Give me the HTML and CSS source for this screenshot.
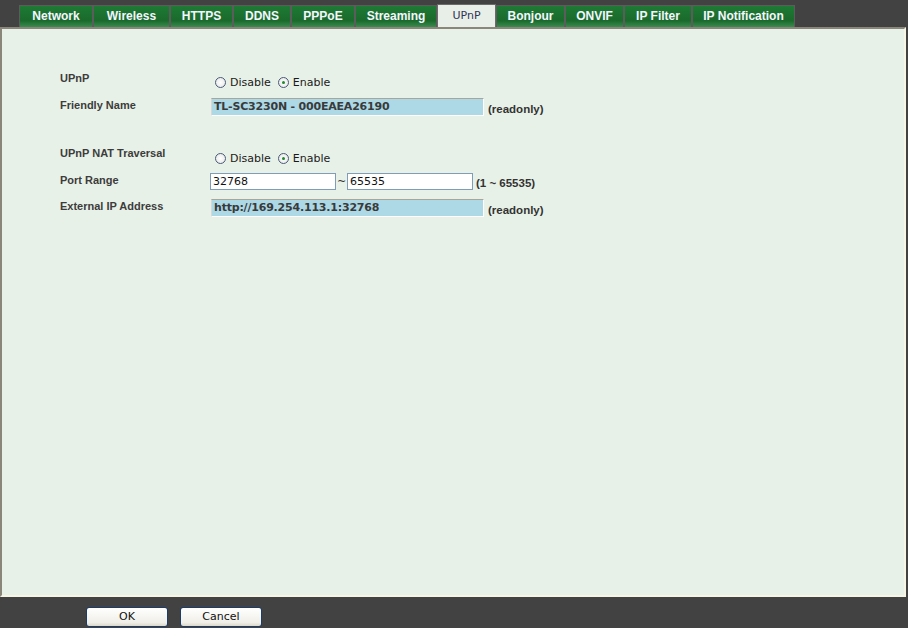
FILE: index.html
```html
<!DOCTYPE html>
<html>
<head>
<meta charset="utf-8">
<link rel="stylesheet" href="styles.css">
</head>
<body>
<div class="tabs">
  <div class="tab w-network">Network</div>
  <div class="tab w-wireless">Wireless</div>
  <div class="tab w-https">HTTPS</div>
  <div class="tab w-ddns">DDNS</div>
  <div class="tab w-pppoe">PPPoE</div>
  <div class="tab w-streaming">Streaming</div>
  <div class="tab active w-upnp">UPnP</div>
  <div class="tab w-bonjour">Bonjour</div>
  <div class="tab w-onvif">ONVIF</div>
  <div class="tab w-ipfilter">IP Filter</div>
  <div class="tab w-ipnotif">IP Notification</div>
</div>
<div class="panel">
  <div class="form">
    <div class="row r-upnp">
      <div class="label">UPnP</div>
      <div class="ctrl radios">
        <span class="radio"></span><span class="rtext">Disable</span>
        <span class="radio on"></span><span class="rtext">Enable</span>
      </div>
    </div>
    <div class="row r-friendly">
      <div class="label">Friendly Name</div>
      <div class="ctrl">
        <div class="ro">TL-SC3230N - 000EAEA26190</div>
        <span class="note">(readonly)</span>
      </div>
    </div>
    <div class="row r-nat">
      <div class="label">UPnP NAT Traversal</div>
      <div class="ctrl radios">
        <span class="radio"></span><span class="rtext">Disable</span>
        <span class="radio on"></span><span class="rtext">Enable</span>
      </div>
    </div>
    <div class="row r-port">
      <div class="label">Port Range</div>
      <div class="ctrl">
        <div class="inp">32768</div>
        <span class="tilde">~</span>
        <div class="inp">65535</div>
        <span class="note">(1 ~ 65535)</span>
      </div>
    </div>
    <div class="row r-ext">
      <div class="label">External IP Address</div>
      <div class="ctrl">
        <div class="ro">http://169.254.113.1:32768</div>
        <span class="note">(readonly)</span>
      </div>
    </div>
  </div>
</div>
<div class="footer">
  <div class="btn">OK</div>
  <div class="btn">Cancel</div>
</div>
</body>
</html>
```
FILE: styles.css
```css
html, body {
  margin: 0;
  padding: 0;
  background: #424242;
  font-family: "DejaVu Sans", "Liberation Sans", sans-serif;
  width: 908px;
  height: 628px;
  overflow: hidden;
}
.tabs {
  display: flex;
  padding: 4px 0 0 19px;
  height: 23px;
  box-sizing: border-box;
}
.tab {
  box-sizing: border-box;
  height: 22px;
  margin-top: 1px;
  border: 1px solid #5c5c5c;
  border-bottom: none;
  background: linear-gradient(#1e7a34, #1a6a2c 70%, #3b8a50);
  color: #f4f6ff;
  font-family: "Liberation Sans", Arial, sans-serif;
  font-weight: bold;
  font-size: 12px;
  line-height: 20px;
  text-align: center;
}
.tab.active {
  background: #e8eee8;
  color: #333355;
  font-weight: normal;
  font-family: "DejaVu Sans", sans-serif;
  font-size: 11px;
  margin-top: 0;
  height: 23px;
  line-height: 22px;
  border-color: #6a6a6a;
}
.w-network { width: 74px; }
.w-wireless { width: 77px; }
.w-https { width: 63px; }
.w-ddns { width: 58px; }
.w-pppoe { width: 64px; }
.w-streaming { width: 82px; }
.w-upnp { width: 59px; }
.w-bonjour { width: 69px; }
.w-onvif { width: 59px; }
.w-ipfilter { width: 68px; }
.w-ipnotif { width: 103px; }
.panel {
  margin-top: 4px;
  width: 906px;
  height: 570px;
  box-sizing: border-box;
  background: #e8f1e7;
  border-top: 2px solid #8a877a;
  border-left: 2px solid #8a877a;
  border-right: 2px solid #f7f5e4;
  border-bottom: 2px solid #f7f5e4;
}
.form {
  padding: 42px 0 0 58px;
  display: flex;
  flex-direction: column;
}
.row {
  display: grid;
  grid-template-columns: 150px auto;
  align-items: start;
}
.label {
  font-family: "Liberation Sans", Arial, sans-serif;
  font-size: 11px;
  font-weight: bold;
  color: #3c3c3c;
  line-height: 14px;
}
.ctrl {
  display: flex;
  align-items: center;
  font-size: 11px;
  color: #222;
}
.radios {
  padding-top: 5px;
  padding-left: 5px;
}
.radio {
  width: 11px;
  height: 11px;
  box-sizing: border-box;
  border: 1px solid #4a5a78;
  border-radius: 50%;
  background: radial-gradient(#ffffff, #e4e4e4);
  margin-right: 4px;
  display: inline-flex;
  align-items: center;
  justify-content: center;
}
.radio.on::after {
  content: "";
  width: 3px;
  height: 3px;
  border-radius: 50%;
  background: #1b8a2a;
}
.rtext {
  margin-right: 7px;
  font-family: "DejaVu Sans", sans-serif;
  font-size: 11px;
  color: #1a1a1a;
}
.r-upnp { height: 27px; }
.r-friendly { height: 48px; }
.r-nat { height: 27px; }
.r-port { height: 26px; }
.r-ext { height: 26px; }
.r-nat .radios { padding-top: 6px; }
.ro {
  box-sizing: border-box;
  width: 273px;
  height: 18px;
  background: #add8e6;
  border-top: 1px solid #aaa597;
  border-left: 1px solid #d8d8d8;
  border-right: 1px solid #fff;
  border-bottom: 1px solid #fff;
  font-family: "DejaVu Sans", sans-serif;
  font-weight: bold;
  font-size: 11px;
  letter-spacing: -0.2px;
  color: #3a3a3a;
  line-height: 15px;
  padding-left: 2px;
  margin-left: 1px;
}
.note {
  margin-left: 4px;
  font-family: "Liberation Sans", Arial, sans-serif;
  font-weight: bold;
  font-size: 11.5px;
  color: #333;
  padding-top: 3px;
}
.inp {
  box-sizing: border-box;
  width: 126px;
  height: 17px;
  background: #fff;
  border: 1px solid #7f9db9;
  font-family: "DejaVu Sans", sans-serif;
  font-size: 11px;
  color: #111;
  line-height: 15px;
  padding-left: 2px;
}
.tilde {
  width: 10px;
  font-size: 11px;
  color: #333;
  padding-left: 1px;
}
.r-port .note { margin-left: 3px; }
.footer {
  display: flex;
  gap: 12px;
  padding: 10px 0 0 86px;
}
.btn {
  box-sizing: border-box;
  width: 82px;
  height: 20px;
  border: 1px solid #1c3c6a;
  border-radius: 3px;
  background: linear-gradient(#ffffff, #f0efe8 80%, #dcd9cc);
  font-family: "DejaVu Sans", sans-serif;
  font-size: 11px;
  color: #111;
  text-align: center;
  line-height: 18px;
}
```
